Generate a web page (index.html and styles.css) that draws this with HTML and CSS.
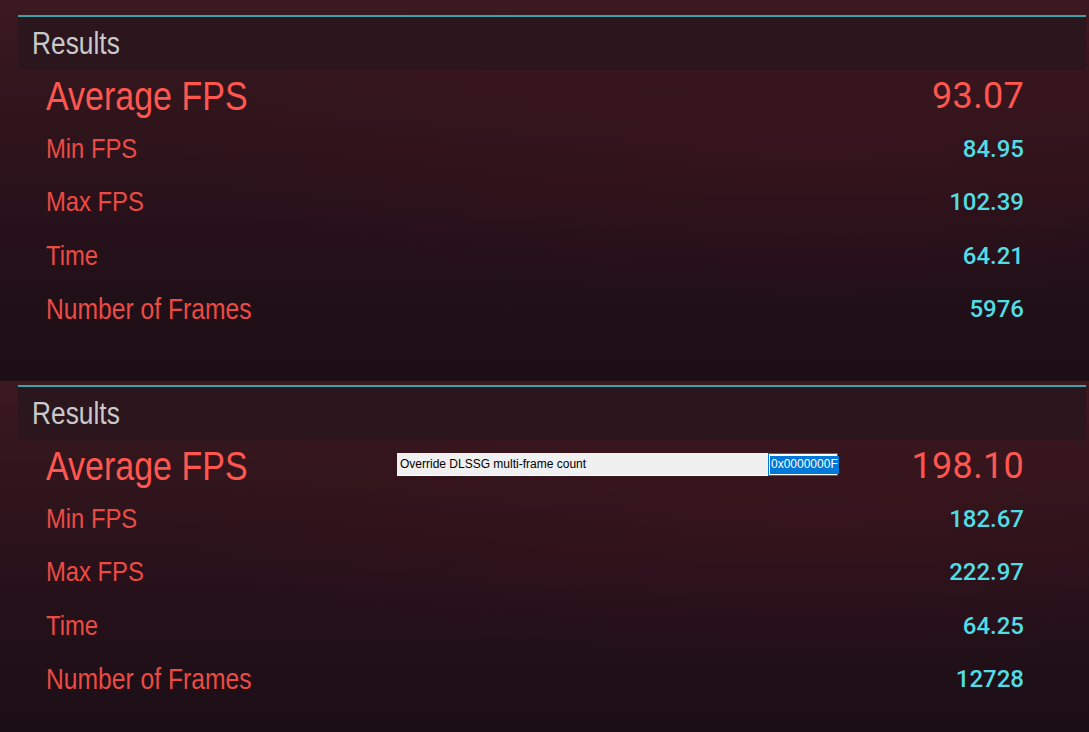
FILE: index.html
```html
<!DOCTYPE html>
<html>
<head>
<meta charset="utf-8">
<link rel="stylesheet" href="styles.css">
</head>
<body>
<section class="panel panel-first">
  <div class="frame">
    <div class="header"><span class="narrow">Results</span></div>
    <div class="rows">
      <div class="row row-main"><span class="label">Average FPS</span><span class="value">93.07</span></div>
      <div class="row"><span class="label">Min FPS</span><span class="value">84.95</span></div>
      <div class="row"><span class="label">Max FPS</span><span class="value">102.39</span></div>
      <div class="row"><span class="label">Time</span><span class="value">64.21</span></div>
      <div class="row"><span class="label">Number of Frames</span><span class="value">5976</span></div>
    </div>
  </div>
</section>
<section class="panel panel-second">
  <div class="frame">
    <div class="header"><span class="narrow">Results</span></div>
    <div class="rows">
      <div class="row row-main"><span class="label">Average FPS</span><span class="value">198.10</span>
        <div class="setting">
          <span class="setting-name">Override DLSSG multi-frame count</span>
          <span class="setting-input"><span class="selected">0x0000000F</span></span>
        </div>
      </div>
      <div class="row"><span class="label">Min FPS</span><span class="value">182.67</span></div>
      <div class="row"><span class="label">Max FPS</span><span class="value">222.97</span></div>
      <div class="row"><span class="label">Time</span><span class="value">64.25</span></div>
      <div class="row"><span class="label">Number of Frames</span><span class="value">12728</span></div>
    </div>
  </div>
</section>
</body>
</html>
```

FILE: styles.css
```css
html, body {
  margin: 0;
  padding: 0;
}
body {
  width: 1089px;
  height: 732px;
  overflow: hidden;
  background: #1c0e16;
  font-family: "Liberation Sans", Arial, sans-serif;
}
.panel {
  box-sizing: border-box;
  padding: 15px 3px 0 18px;
  background:
    radial-gradient(ellipse 60% 45% at 75% 35%, rgba(70, 20, 30, 0.35), rgba(70, 20, 30, 0) 100%),
    linear-gradient(180deg, #3b1920 0%, #32151c 25%, #26111a 60%, #1c0e16 100%);
}
.panel-first {
  height: 381px;
}
.panel-second {
  height: 351px;
  padding-top: 4px;
}
.frame {
  border-top: 2px solid #3ba2a9;
}
.header {
  height: 53px;
  box-sizing: border-box;
  padding: 12px 0 0 14px;
  background: #2b161d;
  color: #c9c9c9;
  font-size: 31px;
  line-height: 30px;
}
.narrow,
.label {
  display: inline-block;
  transform: scaleX(0.85);
  transform-origin: left center;
}
.rows {
  display: flex;
  flex-direction: column;
  padding: 0 62px 0 28px;
}
.row {
  position: relative;
  height: 53.5px;
  display: flex;
  align-items: center;
  justify-content: space-between;
}
.row-main {
  height: 52px;
}
.label {
  color: #ec4b43;
  font-size: 28px;
}
.row-main .label {
  color: #ff5650;
  font-size: 40px;
}
.row:last-child .label {
  font-size: 29px;
}
.value {
  font-family: Roboto, "Liberation Sans", sans-serif;
  font-weight: 500;
  color: #52dde6;
  font-size: 24px;
}
.row-main .value {
  color: #ff5650;
  font-weight: 400;
  font-size: 36px;
  letter-spacing: 0.3px;
}
.setting {
  position: absolute;
  left: 351px;
  top: 13px;
  width: 441px;
  height: 23px;
  box-sizing: border-box;
  display: flex;
  background: #ffffff;
  font-family: "Liberation Sans", Arial, sans-serif;
  font-size: 12px;
}
.setting-name {
  width: 371px;
  height: 22px;
  box-sizing: border-box;
  padding: 4px 0 0 3px;
  background: #f0f0f0;
  color: #000000;
}
.setting-input {
  width: 70px;
  height: 23px;
  box-sizing: border-box;
  border: 1px solid #0078d7;
  padding: 2px 0 0 1px;
}
.selected {
  display: inline-block;
  background: #0078d7;
  color: #ffffff;
  padding: 1px 1px 2px 1px;
  line-height: 15px;
}
```
